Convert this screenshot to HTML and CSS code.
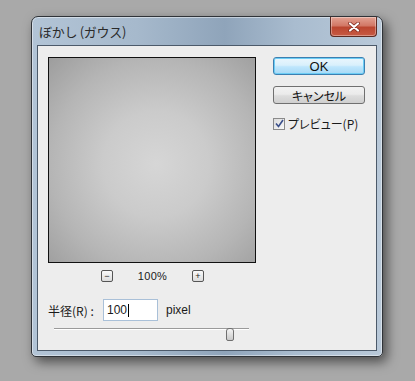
FILE: index.html
```html
<!DOCTYPE html>
<html lang="ja">
<head>
  <meta charset="UTF-8">
  <title>ぼかし (ガウス)</title>
  <link rel="stylesheet" href="styles.css">
</head>
<body>
<div class="window">
  <div class="titlebar">
    <span class="title">ぼかし (ガウス)</span>
    <div class="close">
      <svg width="12" height="10" viewBox="0 0 12 10">
        <path d="M2 1.5 L10 8.5 M10 1.5 L2 8.5" stroke="#7a2418" stroke-width="3.6" stroke-linecap="round"/>
        <path d="M2 1.5 L10 8.5 M10 1.5 L2 8.5" stroke="#ffffff" stroke-width="2.2" stroke-linecap="round"/>
      </svg>
    </div>
  </div>
  <div class="client">
    <div class="left-col">
      <div class="preview"></div>
      <div class="zoom-row">
        <span class="zoom-btn">−</span>
        <span class="zoom-val">100%</span>
        <span class="zoom-btn">+</span>
      </div>
      <div class="radius-row">
        <span class="label">半径(R) :</span>
        <div class="input">100<span class="caret"></span></div>
        <span class="unit">pixel</span>
      </div>
      <div class="slider">
        <div class="track"></div>
        <div class="thumb"></div>
      </div>
    </div>
    <div class="right-col">
      <button class="button primary">OK</button>
      <button class="button">キャンセル</button>
      <label class="check">
        <span class="box">
          <svg width="9" height="9" viewBox="0 0 9 9">
            <path d="M1 4.5 L3.5 7.5 L8 1" fill="none" stroke="#3a4f8a" stroke-width="1.6"/>
          </svg>
        </span>
        プレビュー(P)
      </label>
    </div>
  </div>
</div>
</body>
</html>
```

FILE: styles.css
```css
html, body {
  margin: 0;
  padding: 0;
}

body {
  width: 415px;
  height: 381px;
  background: #a9a9a9;
  font-family: "Liberation Sans", "Noto Sans CJK JP", sans-serif;
  font-size: 12px;
  color: #1a1a1a;
  overflow: hidden;
}

.window {
  box-sizing: border-box;
  margin: 16px 0 0 31px;
  width: 352px;
  height: 341px;
  border: 1px solid #2f3338;
  border-radius: 7px 7px 5px 5px;
  background: linear-gradient(90deg, #b2c4d6 0%, #a6b9cc 30%, #8fa4ba 55%, #a9bccf 75%, #b9c9d9 100%);
  box-shadow: 4px 5px 12px rgba(0, 0, 0, 0.55), inset 0 0 0 1px rgba(255, 255, 255, 0.45);
  padding: 0 5px 5px 5px;
  display: flex;
  flex-direction: column;
}

.titlebar {
  height: 28px;
  display: flex;
  align-items: flex-start;
  justify-content: space-between;
}

.title {
  font-family: "Noto Sans CJK JP", sans-serif;
  font-size: 13px;
  letter-spacing: -0.3px;
  color: #2a2a2a;
  margin: 6px 0 0 2px;
  line-height: 18px;
}

.close {
  width: 45px;
  height: 19px;
  border: 1px solid #5d2a22;
  border-top: none;
  border-radius: 0 0 4px 4px;
  background: linear-gradient(180deg, #e3a293 0%, #d27866 45%, #bb4630 55%, #c75a44 100%);
  display: flex;
  align-items: center;
  justify-content: center;
  box-shadow: inset 0 0 0 1px rgba(255, 255, 255, 0.35);
}

.client {
  flex: 1;
  background: #ededed;
  border: 1px solid #4c5a6a;
  display: flex;
  padding: 11px 0 0 10px;
}

.left-col {
  width: 208px;
}

.preview {
  width: 206px;
  height: 204px;
  border: 1px solid #111;
  background: radial-gradient(ellipse at 52% 52%, #d6d6d6 0%, #cbcbcb 35%, #b5b5b5 70%, #9d9d9d 100%);
}

.zoom-row {
  display: flex;
  align-items: center;
  margin: 7px 0 0 53px;
  height: 12px;
}

.zoom-btn {
  width: 10px;
  height: 10px;
  border: 1px solid #555;
  border-radius: 2px;
  background: linear-gradient(180deg, #fafafa, #dcdcdc);
  font-size: 9px;
  line-height: 10px;
  text-align: center;
  color: #222;
}

.zoom-val {
  font-size: 11px;
  width: 79px;
  text-align: center;
  letter-spacing: 0.3px;
}

.radius-row {
  display: flex;
  align-items: center;
  margin-top: 17px;
  height: 22px;
}

.label {
  font-family: "Noto Sans CJK JP", sans-serif;
  font-size: 12px;
  width: 55px;
}

.input {
  width: 50px;
  height: 20px;
  border: 1px solid #a9c0d8;
  background: #fff;
  padding-left: 3px;
  font-size: 12px;
  display: flex;
  align-items: center;
}

.caret {
  display: inline-block;
  width: 1px;
  height: 13px;
  background: #000;
  margin-left: 1px;
}

.unit {
  margin-left: 8px;
  font-size: 12px;
}

.slider {
  position: relative;
  margin: 7px 0 0 6px;
  width: 195px;
  height: 13px;
}

.track {
  margin-top: 6px;
  height: 1px;
  background: #9a9a9a;
  border-bottom: 1px solid #fff;
}

.thumb {
  position: absolute;
  left: 172px;
  top: 0;
  width: 6px;
  height: 11px;
  border: 1px solid #6f6f6f;
  border-radius: 3px 3px 2px 2px;
  background: linear-gradient(180deg, #f4f4f4, #c9c9c9);
}

.right-col {
  margin-left: 17px;
  display: flex;
  flex-direction: column;
  width: 92px;
}

.button {
  width: 92px;
  height: 18px;
  padding: 0;
  border: 1px solid #707070;
  border-radius: 3px;
  background: linear-gradient(180deg, #f2f2f2 0%, #ebebeb 45%, #dddddd 55%, #cfcfcf 100%);
  font-family: "Liberation Sans", "Noto Sans CJK JP", sans-serif;
  font-feature-settings: "palt";
  font-size: 12px;
  color: #111;
  margin-bottom: 11px;
}

.button.primary {
  border-color: #3c7fb1;
  background: linear-gradient(180deg, #eaf6fd 0%, #d9f0fc 45%, #bee6fd 55%, #a7d9f5 100%);
  box-shadow: inset 0 0 0 1px #6ccdf5;
  font-size: 13px;
}

.check {
  display: flex;
  align-items: center;
  margin-top: 0;
  font-family: "Noto Sans CJK JP", sans-serif;
  font-feature-settings: "palt";
  font-size: 12px;
}

.box {
  width: 10px;
  height: 10px;
  border: 1px solid #8a8a8a;
  background: linear-gradient(135deg, #dcdcdc, #f8f8f8);
  margin-right: 3px;
  display: flex;
  align-items: center;
  justify-content: center;
}
```
